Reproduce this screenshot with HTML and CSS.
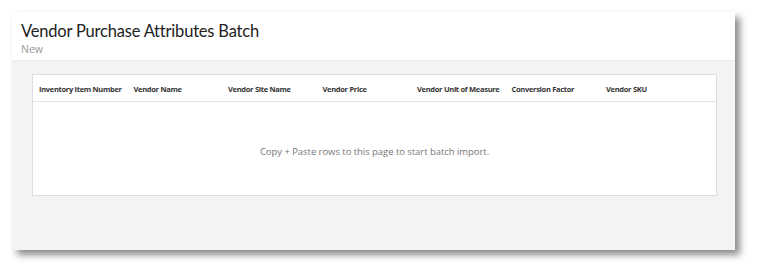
FILE: index.html
```html
<!DOCTYPE html>
<html lang="en">
<head>
    <meta charset="UTF-8">
    <title>Vendor Purchase Attributes Batch</title>
    <link rel="stylesheet" href="styles.css">
</head>
<body>
    <div class="window">
        <div class="page-header">
            <h1>Vendor Purchase Attributes Batch</h1>
            <div class="status">New</div>
        </div>

        <div class="content">
            <div class="grid">
                <div class="grid-head">
                    <div class="col">Inventory Item Number</div>
                    <div class="col">Vendor Name</div>
                    <div class="col">Vendor Site Name</div>
                    <div class="col">Vendor Price</div>
                    <div class="col">Vendor Unit of Measure</div>
                    <div class="col">Conversion Factor</div>
                    <div class="col">Vendor SKU</div>
                </div>
                <div class="grid-empty">Copy + Paste rows to this page to start batch import.</div>
            </div>
        </div>
    </div>
</body>
</html>
```

FILE: styles.css
```css
body { margin: 0; padding: 12px; background: #fff; font-family: "Open Sans", "Noto Sans", sans-serif; color: #222; }
.window { width: 723px; height: 238px; background: #f3f3f3; box-shadow: 5px 5px 7px rgba(0, 0, 0, 0.45); display: flex; flex-direction: column; }
.page-header { background: #fff; height: 49px; padding: 8px 0 0 9px; box-sizing: border-box; border-bottom: 1px solid #ececec; }
h1 { margin: 0; font-family: "Lato", "Open Sans", sans-serif; font-size: 16.5px; font-weight: 400; line-height: 23px; letter-spacing: -0.2px; color: #222; }
.status { font-size: 10.5px; color: #999; line-height: 12px; }
.content { padding: 13px 18px 0 20px; }
.grid { background: #fff; border: 1px solid #dedede; height: 122px; box-sizing: border-box; display: flex; flex-direction: column; }
.grid-head { display: flex; height: 24px; align-items: center; padding: 2px 0 0 6px; border-bottom: 1px solid #e3e3e3; }
.col { width: 94.5px; flex: none; font-size: 7.5px; font-weight: 700; color: #333; white-space: nowrap; letter-spacing: -0.3px; }
.grid-empty { flex: 1; display: flex; align-items: center; justify-content: center; font-size: 9.5px; color: #777; padding-top: 5px; letter-spacing: -0.05px; }
```
